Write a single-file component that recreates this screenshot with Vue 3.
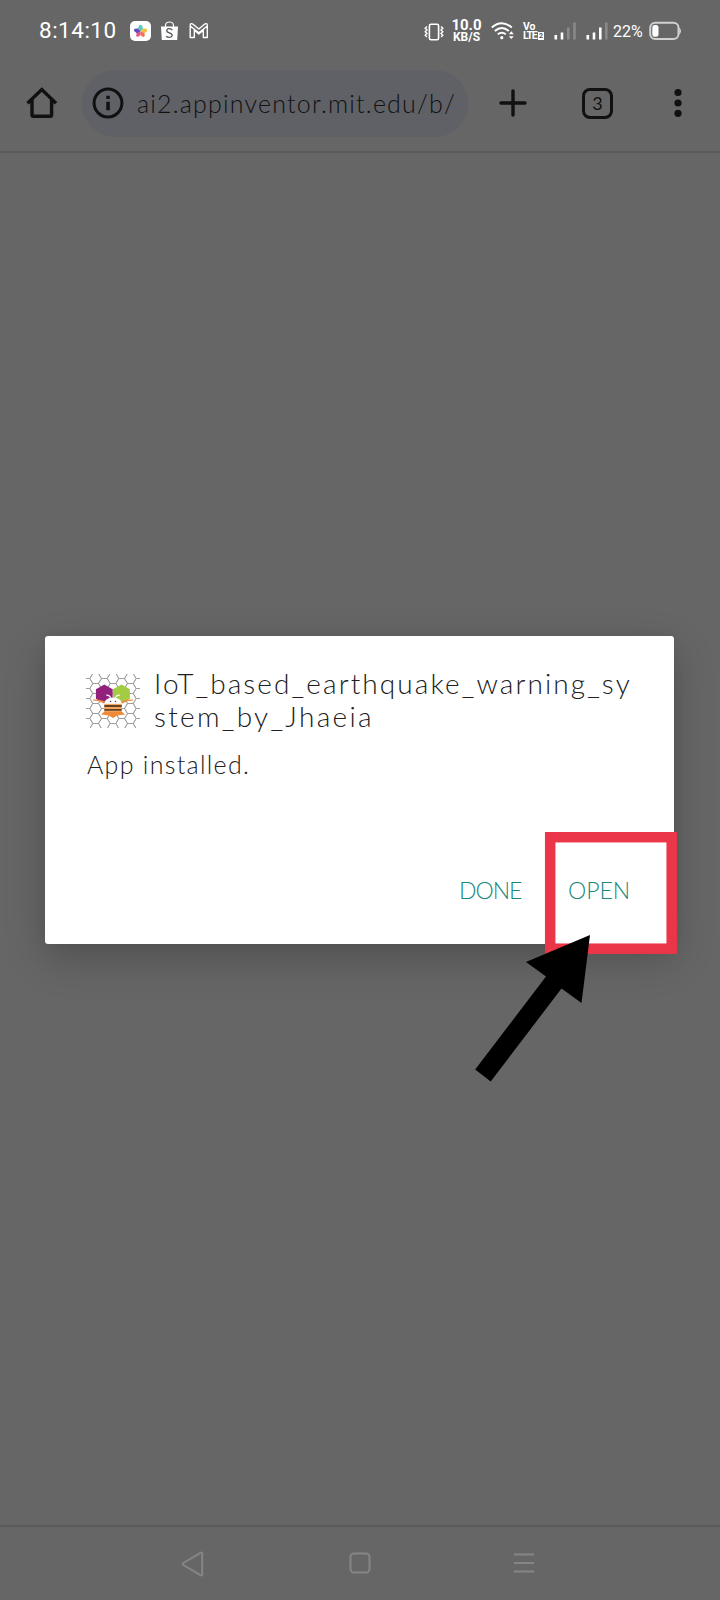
<script setup>
const cells = []
for (let c = 0; c < 7; c++) {
  for (let r = -1; r < 6; r++) {
    cells.push({ x: c * 8.67 + 1, y: r * 10 + (c % 2 ? 0 : 5) + 4.5 })
  }
}
const hex = ({ x, y }) =>
  `M${x - 5.8} ${y}L${x - 2.9} ${y - 5}H${x + 2.9}L${x + 5.8} ${y}L${x + 2.9} ${y + 5}H${x - 2.9}Z`
</script>

<template>
  <main class="screen">
    <header class="status">
      <span class="clock">8:14:10</span>
      <svg class="app-glyphs" width="80" height="22" viewBox="0 0 80 22">
        <rect x="0" y="1" width="21" height="20" rx="5" fill="#fff" />
        <path d="M10.5 11.500 7.900 8.500 9 5.500q1.500-1.400 3 0l1.100 3Z" fill="#61c7c9" />
        <path d="M10.500 11.500 13 8.500l3.300.3q1.600.9.600 2.500L14.500 13Z" fill="#f8bf35" />
        <path d="M10.500 11.500 14.400 12.800l.4 3q-.6 1.700-2.200.9L10.500 15Z" fill="#f2705a" />
        <path d="M10.500 11.500v3.700l-2.500 1.600q-1.700.3-1.800-1.200l.5-2.800Z" fill="#e8547f" />
        <path d="M10.500 11.500 6.700 13.200 4.200 11q-.9-1.500.6-2.300l3.200-.2Z" fill="#6547bd" />
        <path d="M31 6.500h17l-.8 13.600H31.800Z" fill="#fff" />
        <path d="M35.500 7V5.500a4 3.500 0 0 1 8 0V7" fill="none" stroke="#fff" stroke-width="1.2" />
        <path d="M42.400 9.800q-4.700-2.400-5.600.5c-.5 3.100 5.700 2.200 5.400 5.200-.5 2.700-4.700 2-6 .7" fill="none" stroke="#555" stroke-width="1.300" />
        <path d="M60.200 17.500V5.700Q60.200 2.500 63 4.200L68.800 9 74.500 4.200Q77.300 2.500 77.300 5.700v11.800h-4V10.300L68.800 14l-4.500-3.700v7.200ZM60.500 6.200l8.300 6.600 8.300-6.600" fill="none" stroke="#fff" stroke-width="1.400" stroke-linejoin="round" />
      </svg>
      <span class="grow"></span>
      <svg class="vibe" width="20" height="20" viewBox="0 0 20 20" fill="none" stroke="#fff">
        <rect x="5.400" y="2.200" width="9.200" height="15.600" rx="1.500" stroke-width="1.600" />
        <path d="m3 4.500-1.800 1.700L3 7.900 1.200 9.700 3 11.500l-1.800 1.800L3 15M17 4.500l1.800 1.700L17 7.900l1.800 1.800-1.800 1.800 1.800 1.800L17 15" stroke-width="1.400" />
      </svg>
      <span class="speed"><b class="rate">10.0</b><b class="unit">KB/S</b></span>
      <svg class="wifi" width="24" height="20" viewBox="0 0 24 20" fill="none" stroke="#fff" stroke-width="2">
        <path d="M.8 6.500q10-8.400 20 0M3.800 10q7-6 14 0M6.800 13.300q4-3.200 8 0" />
        <circle cx="10.800" cy="16.700" r="1.600" fill="#fff" stroke="none" />
        <path d="m17.800 13.200 2.500-2.900 2.500 2.900ZM17.800 15.200l2.500 2.900 2.500-2.900Z" fill="#fff" stroke="none" />
      </svg>
      <span class="volte"><b>Vo</b><span class="lte"><b>LTE</b><i>2</i></span></span>
      <svg class="signals" width="56" height="20" viewBox="0 0 56 20" fill="#fff">
        <path d="M.5 14h2.600v4.500H.5zM6.700 11.500h2.600v7H6.700zM32.500 14h2.600v4.500h-2.600zM38.700 11.500h2.600v7h-2.600zM45 6.500h2.600v12H45z" />
        <path d="M13 6.500h2.600v12H13zM19.200 1.500h2.600v17h-2.600zM51 1.500h2.600v17H51z" fill="#898989" />
      </svg>
      <span class="pct">22%</span>
      <svg class="battery" width="33" height="20" viewBox="0 0 33 20">
        <rect x="1.200" y="1.800" width="28.300" height="16.200" rx="5" fill="none" stroke="#d1d1d1" stroke-width="2" />
        <rect x="3.300" y="4.100" width="6.200" height="11.700" rx="2.500" fill="#fff" />
        <path d="M30.500 6.500q2.700 3.500 0 7z" fill="#eee" />
      </svg>
    </header>

    <nav class="toolbar">
      <svg class="home" width="32" height="32" viewBox="0 0 32 32" fill="none" stroke="#111" stroke-width="3.400">
        <path d="M1.500 16.200 15.800 2.500 30 16.200M6 13v15q0 1.300 1.300 1.300h17q1.300 0 1.300-1.300V13" />
      </svg>
      <div class="address">
        <svg width="32" height="32" viewBox="0 0 32 32">
          <circle cx="16" cy="16" r="13.900" fill="none" stroke="#111" stroke-width="3" />
          <path d="M14.300 8.700h3.500v3.200h-3.500zM14.300 14.800h3.500v8.500h-3.500z" fill="#111" />
        </svg>
        <span class="url">ai2.appinventor.mit.edu/b/</span>
      </div>
      <svg class="plus" width="28" height="28" viewBox="0 0 28 28">
        <path d="M14 2v24M2 14h24" stroke="#111" stroke-width="3.400" stroke-linecap="round" />
      </svg>
      <span class="tabs">3</span>
      <svg class="dots" width="8" height="30" viewBox="0 0 8 30" fill="#111">
        <circle cx="4" cy="4.500" r="3.600" /><circle cx="4" cy="15" r="3.600" /><circle cx="4" cy="25.300" r="3.600" />
      </svg>
    </nav>

    <section class="page">
      <article class="dialog">
        <div class="heading">
          <svg class="logo" width="54" height="54" viewBox="0 0 54 54">
            <path v-for="(c, i) in cells" :key="i" :d="hex(c)" fill="none" stroke="#999" stroke-width=".8" />
            <path d="m18.300 10.500 8.400 4.800v9.400l-8.400 4.800-8.400-4.800v-9.400Z" fill="#92217d" />
            <path d="m35.500 10.500 8.400 4.800v9.400l-8.400 4.800-8.600-4.800v-9.400Z" fill="#a3cc43" />
            <path d="M7 25.500q7-.5 12 2l-1 2q-5-3-11-3ZM47 25.500q-7-.5-12 2l1 2q5-3 11-3ZM15 40.500l4-3.500h16l4 3.500-7.500 1-4.500 2.500-4.500-2.500Z" fill="#ef8b38" />
            <path d="M18 30q1-6.500 9-6.500t9 6.500Z" fill="#fff" />
            <path d="M18.300 29.800h17.400v8H18.300z" fill="#efa65d" />
            <path d="M18.300 32h17.400M18.300 35.800h17.400" stroke="#654027" stroke-width="1.800" />
            <path d="M24.800 24.500q-1-3.500-4.500-3.300M29.200 24.500q1-3.500 4.500-3.300" fill="none" stroke="#fff" stroke-width="1.300" />
            <circle cx="24.500" cy="27.500" r=".8" fill="#444" /><circle cx="29.500" cy="27.500" r=".8" fill="#444" />
          </svg>
          <h1><span class="l1">IoT_based_earthquake_warning_sy</span><span class="l2">stem_by_Jhaeia</span></h1>
        </div>
        <p>App installed.</p>
        <footer><button class="done">DONE</button><button class="open">OPEN</button></footer>
        <svg class="pointer" width="212" height="252" viewBox="0 0 212 252">
          <rect x="82.200" y="5.200" width="121.500" height="111.500" fill="none" stroke="#eb3549" stroke-width="10.500" />
          <path d="M122 103 113.500 171 93.500 156.500 22.700 249.500 7.200 237.500 78 144.500 58 130Z" />
        </svg>
      </article>
    </section>

    <footer class="system">
      <svg width="24" height="26" viewBox="0 0 24 26"><path d="M19.500 1.800q1.700-1 1.700 1v20.400q0 2-1.700 1L2.300 14q-1.300-1 0-2Z" /></svg>
      <svg width="22" height="22" viewBox="0 0 22 22"><rect x="1.500" y="1.500" width="19" height="19" rx="3.500" /></svg>
      <svg width="22" height="22" viewBox="0 0 22 22"><path d="M1 2.500h20M1 11h20M1 19.500h20" /></svg>
    </footer>
  </main>
</template>

<style>
body { margin: 0; background: #666; }
</style>

<style scoped>
.screen { width: 720px; height: 1600px; background: #666; display: flex; flex-direction: column; overflow: hidden; font-family: Lato, "Open Sans", sans-serif; }
.status { height: 62px; box-sizing: border-box; padding: 0 38px 0 39px; display: flex; align-items: center; color: #fff; font-family: Roboto, sans-serif; }
.clock { width: 91px; font-size: 22.5px; letter-spacing: .5px; white-space: nowrap; position: relative; top: -1px; }
.app-glyphs { flex: none; }
.grow { flex: 1; }
.vibe { margin: 2px 7px 0 0; flex: none; }
.speed { width: 31px; margin-right: 9px; display: flex; flex-direction: column; align-items: center; gap: 1px; }
.rate { font-size: 15px; line-height: 11px; }
.unit { font-size: 12px; line-height: 10px; }
.wifi { flex: none; margin-right: 8px; }
.volte { width: 23px; margin-right: 8px; font-size: 10.5px; line-height: 9px; }
.volte b { display: block; }
.lte { display: flex; align-items: center; }
.lte b { width: 14px; letter-spacing: -1.1px; }
.lte i { background: #fff; color: #555; font-size: 7px; line-height: 8px; font-style: normal; font-weight: 700; padding: 0 1px; margin-left: 1px; }
.signals { flex: none; margin-right: 3px; }
.pct { width: 36px; font-size: 16px; }
.battery { flex: none; }
.toolbar { box-sizing: border-box; height: 91px; border-bottom: 2px solid #5b5b5b; display: flex; align-items: center; color: #111; padding: 0 0 7px 26px; }
.toolbar > * { flex: none; }
.address { width: 386px; height: 67px; border-radius: 34px; background: #5f6166; margin-left: 24px; box-sizing: border-box; padding-left: 10px; display: flex; align-items: center; }
.url { margin-left: 13px; font-size: 25px; font-weight: 300; letter-spacing: 1.2px; line-height: 30px; white-space: nowrap; }
.plus { margin-left: 31px; }
.tabs { width: 31px; height: 31px; margin-left: 55px; box-sizing: border-box; border: 3px solid #111; border-radius: 8px; text-align: center; font-size: 18px; line-height: 25px; }
.dots { margin-left: 61px; }
.page { height: 1372px; display: flex; flex-direction: column; }
.dialog { position: relative; margin: 483px 0 0 45px; width: 629px; height: 308px; box-sizing: border-box; padding: 32px 41px 0; border-radius: 3px; background: #fff; box-shadow: 0 14px 40px rgba(0,0,0,.22), 0 0 12px rgba(0,0,0,.05); color: #202020; }
.heading { display: flex; }
.logo { margin: 6px 14px 0 0; flex: none; }
h1 { margin: 0; font-size: 28px; line-height: 33px; font-weight: 300; white-space: nowrap; position: relative; top: -1px; }
h1 span { display: block; letter-spacing: 2.1px; }
h1 .l2 { letter-spacing: 2.3px; }
p { margin: 13px 0 0 1px; font-size: 25px; line-height: 34px; font-weight: 300; letter-spacing: 1.3px; white-space: nowrap; }
.dialog footer { display: flex; justify-content: flex-end; gap: 47px; margin-top: 93px; padding-right: 3px; }
button { appearance: none; border: 0; padding: 0; background: none; width: 62px; text-align: left; color: #15877b; font: 300 23px/32px Lato, sans-serif; white-space: nowrap; }
.done { letter-spacing: -1px; }
.pointer { position: absolute; left: 423px; top: 196px; }
.system { height: 73px; border-top: 2px solid #5b5b5b; display: flex; align-items: flex-start; box-sizing: border-box; padding: 24px 0 0 181px; }
.system svg { flex: none; fill: none; stroke: #858585; stroke-width: 2; }
.system svg:nth-child(2) { margin: 1px 0 0 144px; }
.system svg:nth-child(3) { margin: 1px 0 0 142px; }
</style>
